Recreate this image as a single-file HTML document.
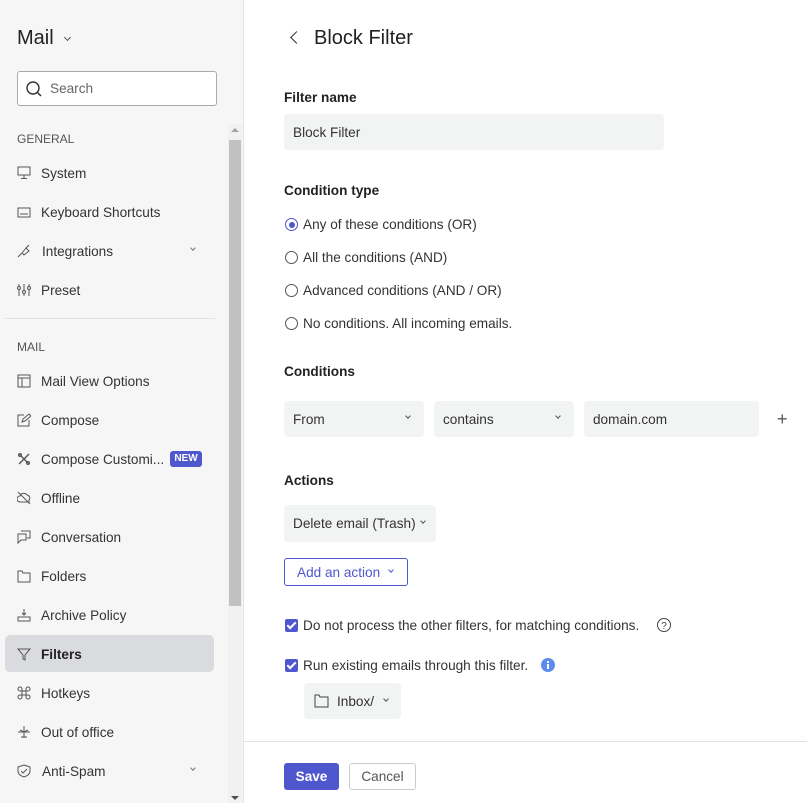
<!DOCTYPE html>
<html><head><meta charset="utf-8"><style>
*{box-sizing:border-box;margin:0;padding:0}
body{width:807px;height:803px;overflow:hidden;background:#fff;font-family:"Liberation Sans",sans-serif;color:#222;font-size:13.6px;position:relative}
.a{position:absolute;white-space:nowrap}
#side{position:absolute;left:0;top:0;width:244px;height:803px;background:#f6f6f6;border-right:1px solid #e4e4e4}
.it{position:absolute;left:17px;font-size:13.6px;color:#333;line-height:18px}
.it svg{position:absolute;left:0;top:2px}
.it span{position:absolute;left:24px;top:1px;white-space:nowrap}
.sec{position:absolute;left:17px;font-size:12px;color:#555}
.lbl{font-weight:bold;font-size:13.6px;color:#222}
.box{position:absolute;background:#f2f3f3;border-radius:4px;font-size:13.6px;color:#333;line-height:37px;padding-left:9px}
.chev{position:absolute;width:5px;height:5px;border-right:1.2px solid #555;border-bottom:1.2px solid #555;transform:rotate(45deg)}
.rad{position:absolute;left:285px;width:13px;height:13px;border:1.2px solid #555;border-radius:50%}
.rt{position:absolute;left:303px;font-size:13.6px;color:#333}
.cb{position:absolute;left:285px;width:13px;height:13px;background:#4f57cf;border-radius:2px}
.cb:after{content:"";position:absolute;left:4px;top:1px;width:3px;height:7px;border-right:2px solid #fff;border-bottom:2px solid #fff;transform:rotate(45deg)}
</style></head><body>
<div id="side">
<div class="a" style="left:17px;top:27px;font-size:20px;color:#222">Mail</div>
<div class="chev" style="left:65px;top:35px"></div>
<div class="a" style="left:17px;top:71px;width:200px;height:35px;background:#fff;border:1px solid #aaa;border-radius:3px"></div>
<svg class="a" style="left:25px;top:80px" width="18" height="18"><circle cx="8" cy="8" r="6" fill="none" stroke="#333" stroke-width="1.4"/><line x1="12" y1="12" x2="16" y2="16" stroke="#333" stroke-width="1.4"/></svg>
<div class="a" style="left:50px;top:81px;color:#666">Search</div>
<div class="sec" style="top:132px">GENERAL</div>
<div class="it" style="top:164px"><svg width="14" height="14"><rect x="1" y="1" width="12" height="8" fill="none" stroke="#555"/><line x1="7" y1="9" x2="7" y2="12" stroke="#555"/><line x1="4" y1="12.5" x2="10" y2="12.5" stroke="#555"/></svg><span>System</span></div>
<div class="it" style="top:203px"><svg width="14" height="14"><rect x="1" y="3" width="12" height="9" fill="none" stroke="#555"/><line x1="3" y1="9" x2="11" y2="9" stroke="#555"/></svg><span>Keyboard Shortcuts</span></div>
<div class="it" style="top:242px"><svg width="14" height="14"><path d="M1 13 L5 9 M5 9 L9 4 L12 7 L7 11 Z M9 4 L12 1" fill="none" stroke="#555"/></svg><span style="left:25px">Integrations</span></div>
<div class="chev" style="left:191px;top:246px;width:4px;height:4px;border-color:#777"></div>
<div class="it" style="top:281px"><svg width="14" height="14"><path d="M2 1v12M7 1v12M12 1v12" stroke="#555"/><circle cx="2" cy="5" r="1.5" fill="#f6f6f6" stroke="#555"/><circle cx="7" cy="9" r="1.5" fill="#f6f6f6" stroke="#555"/><circle cx="12" cy="5" r="1.5" fill="#f6f6f6" stroke="#555"/></svg><span>Preset</span></div>
<div class="a" style="left:5px;top:318px;width:210px;height:1px;background:#e2e2e2"></div>
<div class="sec" style="top:340px">MAIL</div>
<div class="it" style="top:372px"><svg width="14" height="14"><rect x="1" y="1" width="12" height="12" fill="none" stroke="#555"/><line x1="1" y1="4" x2="13" y2="4" stroke="#555"/><line x1="5" y1="4" x2="5" y2="13" stroke="#555"/></svg><span>Mail View Options</span></div>
<div class="it" style="top:411px"><svg width="14" height="14"><path d="M7 2H1v11h11V7M5 9l1-3 6-5 2 2-6 5z" fill="none" stroke="#555"/></svg><span>Compose</span></div>
<div class="it" style="top:450px"><svg width="14" height="14"><path d="M2 2l10 10M12 2L2 12" fill="none" stroke="#555" stroke-width="1.4"/><circle cx="3" cy="3" r="1.5" fill="none" stroke="#555"/><circle cx="11" cy="11" r="1.5" fill="none" stroke="#555"/></svg><span>Compose Customi...</span></div>
<div class="a" style="left:170px;top:451px;width:32px;height:16px;background:#4f57cf;color:#fff;font-size:10px;font-weight:bold;text-align:center;line-height:16px;border-radius:3px">NEW</div>
<div class="it" style="top:489px"><svg width="14" height="14"><path d="M3 5a4 4 0 0 1 7-1 3 3 0 0 1 2 5v2H3a2 2 0 0 1 0-6zM1 1l12 12" fill="none" stroke="#555"/></svg><span>Offline</span></div>
<div class="it" style="top:528px"><svg width="14" height="14"><path d="M4 1h9v7H10M1 4h8v6H4l-3 3z" fill="none" stroke="#555"/></svg><span>Conversation</span></div>
<div class="it" style="top:567px"><svg width="14" height="14"><path d="M1 2h4l1 2h7v9H1z" fill="none" stroke="#555"/></svg><span>Folders</span></div>
<div class="it" style="top:606px"><svg width="14" height="14"><path d="M1 9h12v4H1zM7 1v6M5 5l2 2 2-2" fill="none" stroke="#555"/></svg><span>Archive Policy</span></div>
<div class="a" style="left:5px;top:635px;width:209px;height:37px;background:#dadbde;border-radius:5px"></div>
<div class="it" style="top:645px"><svg width="14" height="14"><path d="M1 2h12L8 8v5L6 12V8z" fill="none" stroke="#555"/></svg><span style="font-weight:bold;color:#222">Filters</span></div>
<div class="it" style="top:684px"><svg width="14" height="14"><path d="M5 5h4v4H5zM5 5H3a2 2 0 1 1 2-2zM9 5V3a2 2 0 1 1 2 2zM9 9h2a2 2 0 1 1-2 2zM5 9v2a2 2 0 1 1-2-2z" fill="none" stroke="#555"/></svg><span>Hotkeys</span></div>
<div class="it" style="top:723px"><svg width="14" height="14"><path d="M7 1v12M1 7h12M4 12h6M3 5l4 2 4-2" fill="none" stroke="#555"/></svg><span>Out of office</span></div>
<div class="it" style="top:762px"><svg width="14" height="14"><path d="M7 1l6 2v4c0 3-3 5-6 6-3-1-6-3-6-6V3z M4 7l2 2 4-4" fill="none" stroke="#555"/></svg><span style="left:25px">Anti-Spam</span></div>
<div class="chev" style="left:191px;top:766px;width:4px;height:4px;border-color:#777"></div>
<div class="a" style="left:228px;top:124px;width:14px;height:679px;background:#f1f1f1"></div>
<div class="a" style="left:229px;top:140px;width:12px;height:466px;background:#c1c1c1"></div>
<div class="a" style="left:231px;top:128px;border:4px solid transparent;border-bottom-color:#a3a3a3;border-top:0"></div>
<div class="a" style="left:231px;top:796px;border:4px solid transparent;border-top-color:#505050;border-bottom:0"></div>
</div>

<div class="a" style="left:292px;top:33px;width:9px;height:9px;border-left:1.6px solid #333;border-bottom:1.6px solid #333;transform:rotate(45deg)"></div>
<div class="a" style="left:314px;top:27px;font-size:20px;color:#222">Block Filter</div>
<div class="a lbl" style="left:284px;top:90px">Filter name</div>
<div class="box" style="left:284px;top:114px;width:380px;height:36px">Block Filter</div>
<div class="a lbl" style="left:284px;top:183px">Condition type</div>
<div class="rad" style="top:218px;border-color:#4f57cf"><div style="position:absolute;left:2.5px;top:2.5px;width:6px;height:6px;border-radius:50%;background:#4f57cf"></div></div>
<div class="rt" style="top:217px">Any of these conditions (OR)</div>
<div class="rad" style="top:251px"></div><div class="rt" style="top:250px">All the conditions (AND)</div>
<div class="rad" style="top:284px"></div><div class="rt" style="top:283px">Advanced conditions (AND / OR)</div>
<div class="rad" style="top:317px"></div><div class="rt" style="top:316px">No conditions. All incoming emails.</div>
<div class="a lbl" style="left:284px;top:364px">Conditions</div>
<div class="box" style="left:284px;top:401px;width:140px;height:36px">From</div><div class="chev" style="left:406px;top:414px;width:4px;height:4px"></div>
<div class="box" style="left:434px;top:401px;width:140px;height:36px">contains</div><div class="chev" style="left:556px;top:414px;width:4px;height:4px"></div>
<div class="box" style="left:584px;top:401px;width:175px;height:36px">domain.com</div>
<div class="a" style="left:777px;top:409px;font-size:18px;color:#555">+</div>
<div class="a lbl" style="left:284px;top:473px">Actions</div>
<div class="box" style="left:284px;top:505px;width:152px;height:37px;line-height:38px">Delete email (Trash)</div><div class="chev" style="left:421px;top:519px;width:4px;height:4px"></div>
<div class="a" style="left:284px;top:558px;width:124px;height:28px;border:1px solid #4f57cf;border-radius:3px;color:#4f57cf;line-height:27px;padding-left:12px">Add an action</div><div class="chev" style="left:389px;top:568px;width:4px;height:4px;border-color:#4f57cf"></div>
<div class="cb" style="top:619px"></div>
<div class="rt" style="top:618px">Do not process the other filters, for matching conditions.</div>
<svg class="a" style="left:656px;top:617px" width="16" height="16"><circle cx="8" cy="8" r="6.5" fill="none" stroke="#444"/><text x="8" y="12" font-size="10" text-anchor="middle" fill="#444" font-family="Liberation Sans">?</text></svg>
<div class="cb" style="top:659px"></div>
<div class="rt" style="top:658px">Run existing emails through this filter.</div>
<svg class="a" style="left:541px;top:658px" width="14" height="14"><circle cx="7" cy="7" r="7" fill="#5b8def"/><rect x="6" y="6" width="2" height="5" fill="#fff"/><rect x="6" y="3" width="2" height="2" fill="#fff"/></svg>
<div class="box" style="left:304px;top:683px;width:97px;height:36px;padding-left:33px">Inbox/</div>
<svg class="a" style="left:314px;top:694px" width="15" height="14"><path d="M1 1h4l1 2h8v10H1z" fill="none" stroke="#444"/></svg>
<div class="chev" style="left:384px;top:697px;width:4px;height:4px"></div>
<div class="a" style="left:244px;top:741px;width:563px;height:1px;background:#e2e2e2"></div>
<div class="a" style="left:284px;top:763px;width:55px;height:27px;background:#4f57cf;border-radius:3px;color:#fff;font-weight:bold;text-align:center;line-height:28px">Save</div>
<div class="a" style="left:349px;top:763px;width:67px;height:27px;border:1px solid #ccc;border-radius:3px;color:#555;text-align:center;line-height:26px">Cancel</div>
</body></html>
